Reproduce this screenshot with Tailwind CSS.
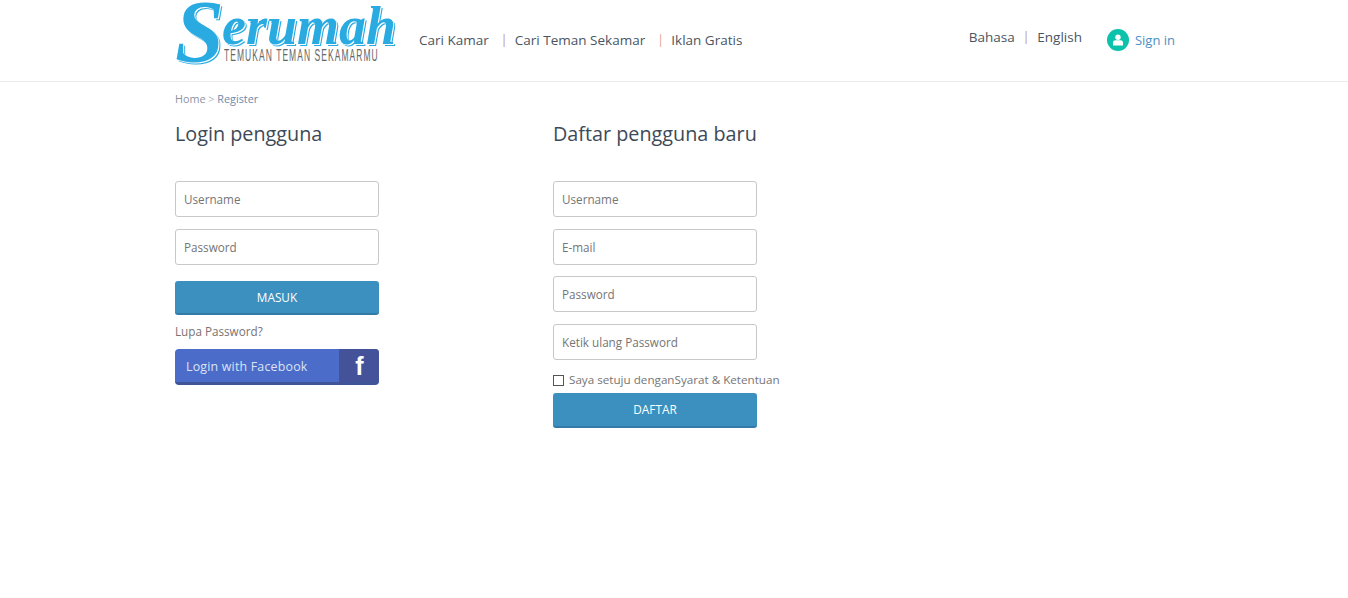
<!DOCTYPE html>
<html lang="en">
<head>
    <meta charset="UTF-8">
    <title>Serumah - Register</title>
    <script src="https://cdn.jsdelivr.net/npm/@tailwindcss/browser@4"></script>
</head>
<body class="bg-white font-['Open_Sans',sans-serif] text-[#3d4a57] h-[598px] overflow-hidden">
    <!-- header -->
    <header class="h-[82px] border-b border-[#ebebeb]">
        <div class="w-[1000px] ml-[175px] h-full flex items-start">
            <div class="w-[244px] h-[68px] relative shrink-0">
                <div class="flex items-baseline h-[68px] -mt-[15px] font-['Liberation_Serif',serif] italic font-bold text-[#29abe2] [text-shadow:1px_1px_0_#fff,2px_2px_0_#29abe2] whitespace-nowrap">
                    <span class="text-[88px] leading-[60px] translate-y-[17px] -mr-[2px]">S</span>
                    <span class="text-[54px] leading-[60px]">erumah</span>
                </div>
                <div class="absolute left-[49px] top-[49px] font-['Liberation_Sans',sans-serif] text-[#666] text-[16px] leading-[14px] tracking-[2px] scale-x-[0.53] origin-left whitespace-nowrap">TEMUKAN TEMAN SEKAMARMU</div>
            </div>
            <nav class="flex items-center h-[80px] text-[13.5px] text-[#4a5563]">
                <a>Cari Kamar</a>
                <span class="ml-[12px] mr-[7.5px] text-[#b98a90] text-xs">|</span>
                <a>Cari Teman Sekamar</a>
                <span class="ml-[12px] mr-[7.5px] text-[#e0a080] text-xs">|</span>
                <a>Iklan Gratis</a>
            </nav>
            <div class="ml-auto flex items-center h-[80px]">
                <div class="flex items-center text-[13.5px] text-[#4a5563] mb-[6px]">
                    <a>Bahasa</a>
                    <span class="mx-[8px] text-[#b98a90] text-xs">|</span>
                    <a>English</a>
                </div>
                <a class="ml-[25px] flex items-center text-[13px] text-[#4a90c4]">
                    <span class="w-[22px] h-[22px] rounded-full bg-[#0cc2aa] flex items-center justify-center mr-[6px]">
                        <svg width="12" height="12" viewBox="0 0 12 12" fill="#fff"><circle cx="6" cy="3.2" r="2.7"/><path d="M1 11.5V8.6C1 7 2.2 6.2 3.5 6.2h5C9.8 6.2 11 7 11 8.6v2.9z"/></svg>
                    </span>
                    <span class="translate-y-[1px]">Sign in</span>
                </a>
            </div>
        </div>
    </header>

    <main class="w-[1000px] ml-[175px]">
        <div class="pt-[9px] text-[10.8px] leading-[15px] text-[#8b95a1]">Home <span class="text-[#b0b8c0]">&gt;</span> <span class="text-[#6b8cae]">Register</span></div>
        <div class="flex mt-[14px]">
            <!-- login -->
            <section class="w-[378px]">
                <h2 class="text-[19.8px] leading-[27px] text-[#3d4a57]">Login pengguna</h2>
                <form class="w-[204px] mt-[34px]">
                    <input placeholder="Username" class="block w-full h-[36px] px-2 border border-[#c8c8c8] rounded-[3px] text-[11.7px] placeholder:text-[#757575]">
                    <input placeholder="Password" class="block w-full h-[36px] px-2 mt-3 border border-[#c8c8c8] rounded-[3px] text-[11.7px] placeholder:text-[#757575]">
                    <button type="button" class="block w-full h-[34px] mt-4 pt-[1px] bg-[#3b90bf] border-b-2 border-[#327ba6] rounded-[3px] text-white text-[11.8px] font-medium">MASUK</button>
                    <div class="mt-[7px] text-[11.7px] leading-[18px] text-[#7a7272]">Lupa Password?</div>
                    <button type="button" class="flex w-full h-[36px] mt-[9px] bg-[#4c6cc9] border-b-[3px] border-[#3f5597] rounded-[4px] overflow-hidden">
                        <span class="flex-1 h-full flex items-center pl-[11px] pt-[3px] text-[12.4px] text-[#dbe3f5] tracking-[0.2px]">Login with Facebook</span>
                        <span class="w-[40px] h-full pt-[3px] pl-[1px] bg-[#435299] flex items-center justify-center text-white text-[25px] font-bold font-['Liberation_Sans',sans-serif]">f</span>
                    </button>
                </form>
            </section>
            <!-- register -->
            <section>
                <h2 class="text-[19.8px] leading-[27px] text-[#3d4a57]">Daftar pengguna baru</h2>
                <form class="w-[204px] mt-[34px]">
                    <input placeholder="Username" class="block w-full h-[36px] px-2 border border-[#c8c8c8] rounded-[3px] text-[11.7px] placeholder:text-[#757575]">
                    <input placeholder="E-mail" class="block w-full h-[36px] px-2 mt-3 border border-[#c8c8c8] rounded-[3px] text-[11.7px] placeholder:text-[#757575]">
                    <input placeholder="Password" class="block w-full h-[36px] px-2 mt-[11px] border border-[#c8c8c8] rounded-[3px] text-[11.7px] placeholder:text-[#757575]">
                    <input placeholder="Ketik ulang Password" class="block w-full h-[36px] px-2 mt-3 border border-[#c8c8c8] rounded-[3px] text-[11.7px] placeholder:text-[#757575]">
                    <label class="flex items-center mt-[11px] h-[18px] text-[11.67px] text-[#757575] whitespace-nowrap">
                        <span class="w-[11px] h-[11px] border border-[#555] mr-[5px] shrink-0"></span>
                        Saya setuju denganSyarat &amp; Ketentuan
                    </label>
                    <button type="button" class="block w-full h-[35px] mt-[4px] bg-[#3b90bf] border-b-2 border-[#327ba6] rounded-[3px] text-white text-[11.8px] font-medium">DAFTAR</button>
                </form>
            </section>
        </div>
    </main>
</body>
</html>
